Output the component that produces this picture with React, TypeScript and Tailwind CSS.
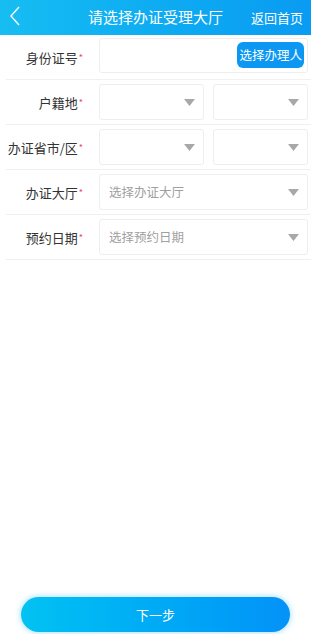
export default function App() {
  const font = { fontFamily: '"Noto Sans CJK SC", "Noto Sans", sans-serif' };

  const Arrow = () => (
    <svg width="11" height="7" viewBox="0 0 11 7" className="shrink-0">
      <path d="M0 0 L11 0 L5.5 7 Z" fill="#a8a8a8" />
    </svg>
  );

  const Label = ({ text }: { text: string }) => (
    <div className="w-[77px] shrink-0 flex items-center justify-end text-[13px] text-[#333] leading-none">
      {text}
      <span className="text-[#f0484a] text-[9px] leading-none ml-[1px]">*</span>
    </div>
  );

  const Select = ({ placeholder, className }: { placeholder?: string; className: string }) => (
    <div
      className={`h-[36px] flex items-center justify-between pl-[9px] pr-[8px] border border-[#eeeeee] rounded-[3px] bg-white ${className}`}
    >
      <span className="text-[12.5px] text-[#a0a0a0]">{placeholder ?? ''}</span>
      <Arrow />
    </div>
  );

  return (
    <div className="w-[311px] h-[634px] bg-white flex flex-col relative overflow-hidden" style={font}>
      {/* header */}
      <div className="h-[35px] shrink-0 flex items-center bg-gradient-to-r from-[#16bdf2] to-[#0a9bf2] text-white relative">
        <svg width="14" height="22" viewBox="0 0 14 22" className="ml-[8px] mt-[-4px]">
          <path d="M11 2 L3 11 L11 20" fill="none" stroke="white" strokeWidth="1.4" />
        </svg>
        <div className="absolute left-0 right-0 text-center text-[15px] pointer-events-none">请选择办证受理大厅</div>
        <div className="ml-auto mr-[8px] text-[13px]">返回首页</div>
      </div>

      {/* form */}
      <div className="flex flex-col">
        <div className="ml-[6px] h-[45px] flex items-center border-b border-[#f0f0f0]">
          <Label text="身份证号" />
          <div className="ml-[16px] mr-[3px] flex-1 h-[35px] border border-[#eeeeee] rounded-[3px] flex items-center justify-end pr-[3px] mt-[-4px]">
            <div className="h-[26px] px-[2px] rounded-[6px] bg-[#0b97f2] text-white text-[12.5px] flex items-center">选择办理人</div>
          </div>
        </div>

        <div className="ml-[6px] h-[45px] flex items-center border-b border-[#f0f0f0]">
          <Label text="户籍地" />
          <div className="ml-[16px] mr-[3px] flex-1 flex gap-[9px]">
            <Select className="w-[105px]" />
            <Select className="flex-1" />
          </div>
        </div>

        <div className="ml-[6px] h-[45px] flex items-center border-b border-[#f0f0f0]">
          <Label text="办证省市/区" />
          <div className="ml-[16px] mr-[3px] flex-1 flex gap-[9px]">
            <Select className="w-[105px]" />
            <Select className="flex-1" />
          </div>
        </div>

        <div className="ml-[6px] h-[45px] flex items-center border-b border-[#f0f0f0]">
          <Label text="办证大厅" />
          <div className="ml-[16px] mr-[3px] flex-1">
            <Select placeholder="选择办证大厅" className="w-full" />
          </div>
        </div>

        <div className="ml-[6px] h-[45px] flex items-center border-b border-[#f0f0f0]">
          <Label text="预约日期" />
          <div className="ml-[16px] mr-[3px] flex-1">
            <Select placeholder="选择预约日期" className="w-full" />
          </div>
        </div>
      </div>

      {/* bottom button */}
      <div className="mt-auto mb-[2px] px-[21px]">
        <div className="h-[35px] rounded-full bg-gradient-to-r from-[#04c2f2] to-[#0592f8] text-white text-[13px] flex items-center justify-center shadow-[0_0_6px_rgba(10,170,245,0.45)]">
          下一步
        </div>
      </div>
    </div>
  );
}
